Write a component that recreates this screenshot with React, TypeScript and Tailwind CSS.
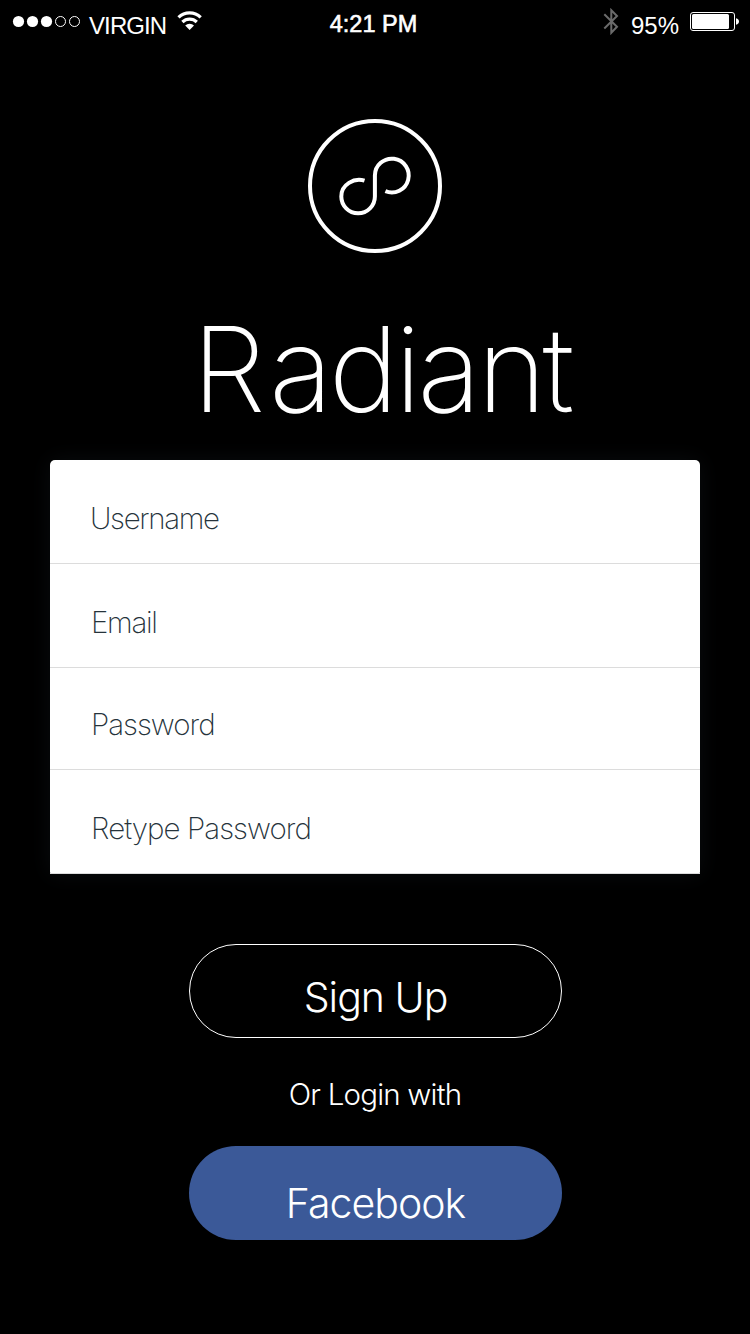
import React from "react";

const fields = [
  { label: "Username", row: "h-[103px] pl-10", text: "pt-[14px] tracking-[-1.35px]" },
  { label: "Email", row: "h-[103px] pl-[41px]", text: "pt-[14px] tracking-[-1.3px]" },
  { label: "Password", row: "h-[101px] pl-[41px]", text: "pt-[11px] tracking-[-1px]" },
  { label: "Retype Password", row: "h-[103px] pl-[41px]", text: "pt-[14px] tracking-[-0.95px]" },
];

function StatusBar() {
  return (
    <header className="grid h-[50px] grid-cols-[1fr_auto_1fr] font-['Liberation_Sans',sans-serif] text-[24px] leading-[52px]">
      <div className="flex pl-3">
        <svg className="mt-[14px] h-4 w-[70px]" viewBox="0 0 70 16" fill="#fff">
          <circle cx="6.5" cy="7.5" r="5.6" />
          <circle cx="20.5" cy="7.5" r="5.6" />
          <circle cx="34.5" cy="7.5" r="5.6" />
          <circle cx="48.5" cy="7.5" r="5" fill="none" stroke="#fff" />
          <circle cx="62.5" cy="7.5" r="5" fill="none" stroke="#fff" />
        </svg>
        <span className="ml-[7px] w-[77px] tracking-[-0.9px]">VIRGIN</span>
        <svg className="mt-[11px] ml-[11px] h-5 w-[26px]" viewBox="0 0 26 20" fill="none" stroke="#fff" strokeWidth="3.2">
          <path d="M1.5 6.3a16 16 0 0 1 22.2 0" />
          <path d="M5.4 11a10.3 10.3 0 0 1 14.4 0" />
          <path d="M12.6 19 8.2 14.6a6.3 6.3 0 0 1 8.8 0Z" fill="#fff" stroke="none" />
        </svg>
      </div>
      <span className="-ml-[3px] text-[23.5px] leading-[48px] [-webkit-text-stroke:0.6px_white]">4:21 PM</span>
      <div className="flex justify-end pr-[11px]">
        <svg className="mt-2 h-[27px] w-4" viewBox="0 0 16 27" fill="none" stroke="#6b6b6b" strokeWidth="2">
          <path d="M1.3 6.3 14 18.8 8.3 24.8V2.2L14 8 1.3 20.5" />
        </svg>
        <span className="ml-3 w-[48px]">95%</span>
        <svg className="mt-3 ml-[11px] h-[19px] w-[49px]" viewBox="0 0 49 19">
          <rect x=".5" y=".5" width="44" height="18" rx="2.5" fill="none" stroke="#fff" />
          <rect x="2" y="2" width="37" height="15" rx="1.5" fill="#fff" />
          <path d="M46 6.2c4 1 4 5.6 0 6.6Z" fill="#fff" />
        </svg>
      </div>
    </header>
  );
}

export default function App() {
  return (
    <main className="flex h-[1334px] w-[750px] flex-col overflow-hidden bg-black font-['Inter',sans-serif] whitespace-nowrap text-white">
      <StatusBar />
      <svg className="mt-[68px] ml-[307px] h-[136px] w-[136px] shrink-0" viewBox="307 118 136 136" fill="none" stroke="#fff" strokeWidth="4">
        <circle cx="375" cy="186" r="65" />
        <path d="M364.5 180.7C354 177.5 341.3 184.5 341.3 196.5A16.8 16.8 0 0 0 374.9 196.5V175.5A16.9 16.9 0 1 1 385.4 191.2" />
      </svg>
      <h1 className="mt-[45px] ml-[192px] h-[140px] text-[118px] leading-[140px] font-[170] tracking-[-3.8px]">
        <span className="tracking-[3.5px]">R</span>adiant
      </h1>
      <form className="mt-[21px] ml-[50px] w-[650px] rounded-t-[5px] rounded-b-[2px] bg-white text-[#26333b] shadow-[0_0_22px_rgba(80,110,120,0.12)]">
        {fields.map((f) => (
          <div key={f.label} className={`box-content flex items-center border-b border-[#dcdcdc] ${f.row}`}>
            <span className={`text-[29.5px] font-extralight ${f.text}`}>{f.label}</span>
          </div>
        ))}
      </form>
      <button className="mt-[70px] ml-[189px] h-[94px] w-[373px] shrink-0 rounded-full border border-white pt-3 text-[41px] leading-[80px] font-light tracking-[-1px]">Sign Up</button>
      <p className="mt-[37px] h-10 text-center text-[29.5px] leading-[39px] font-light tracking-[-0.8px]">Or Login with</p>
      <button className="mt-[31px] ml-[189px] h-[94px] w-[373px] shrink-0 rounded-full bg-[#3b5998] pt-5 text-[41px] leading-[74px] font-light tracking-[-1px]">Facebook</button>
    </main>
  );
}
